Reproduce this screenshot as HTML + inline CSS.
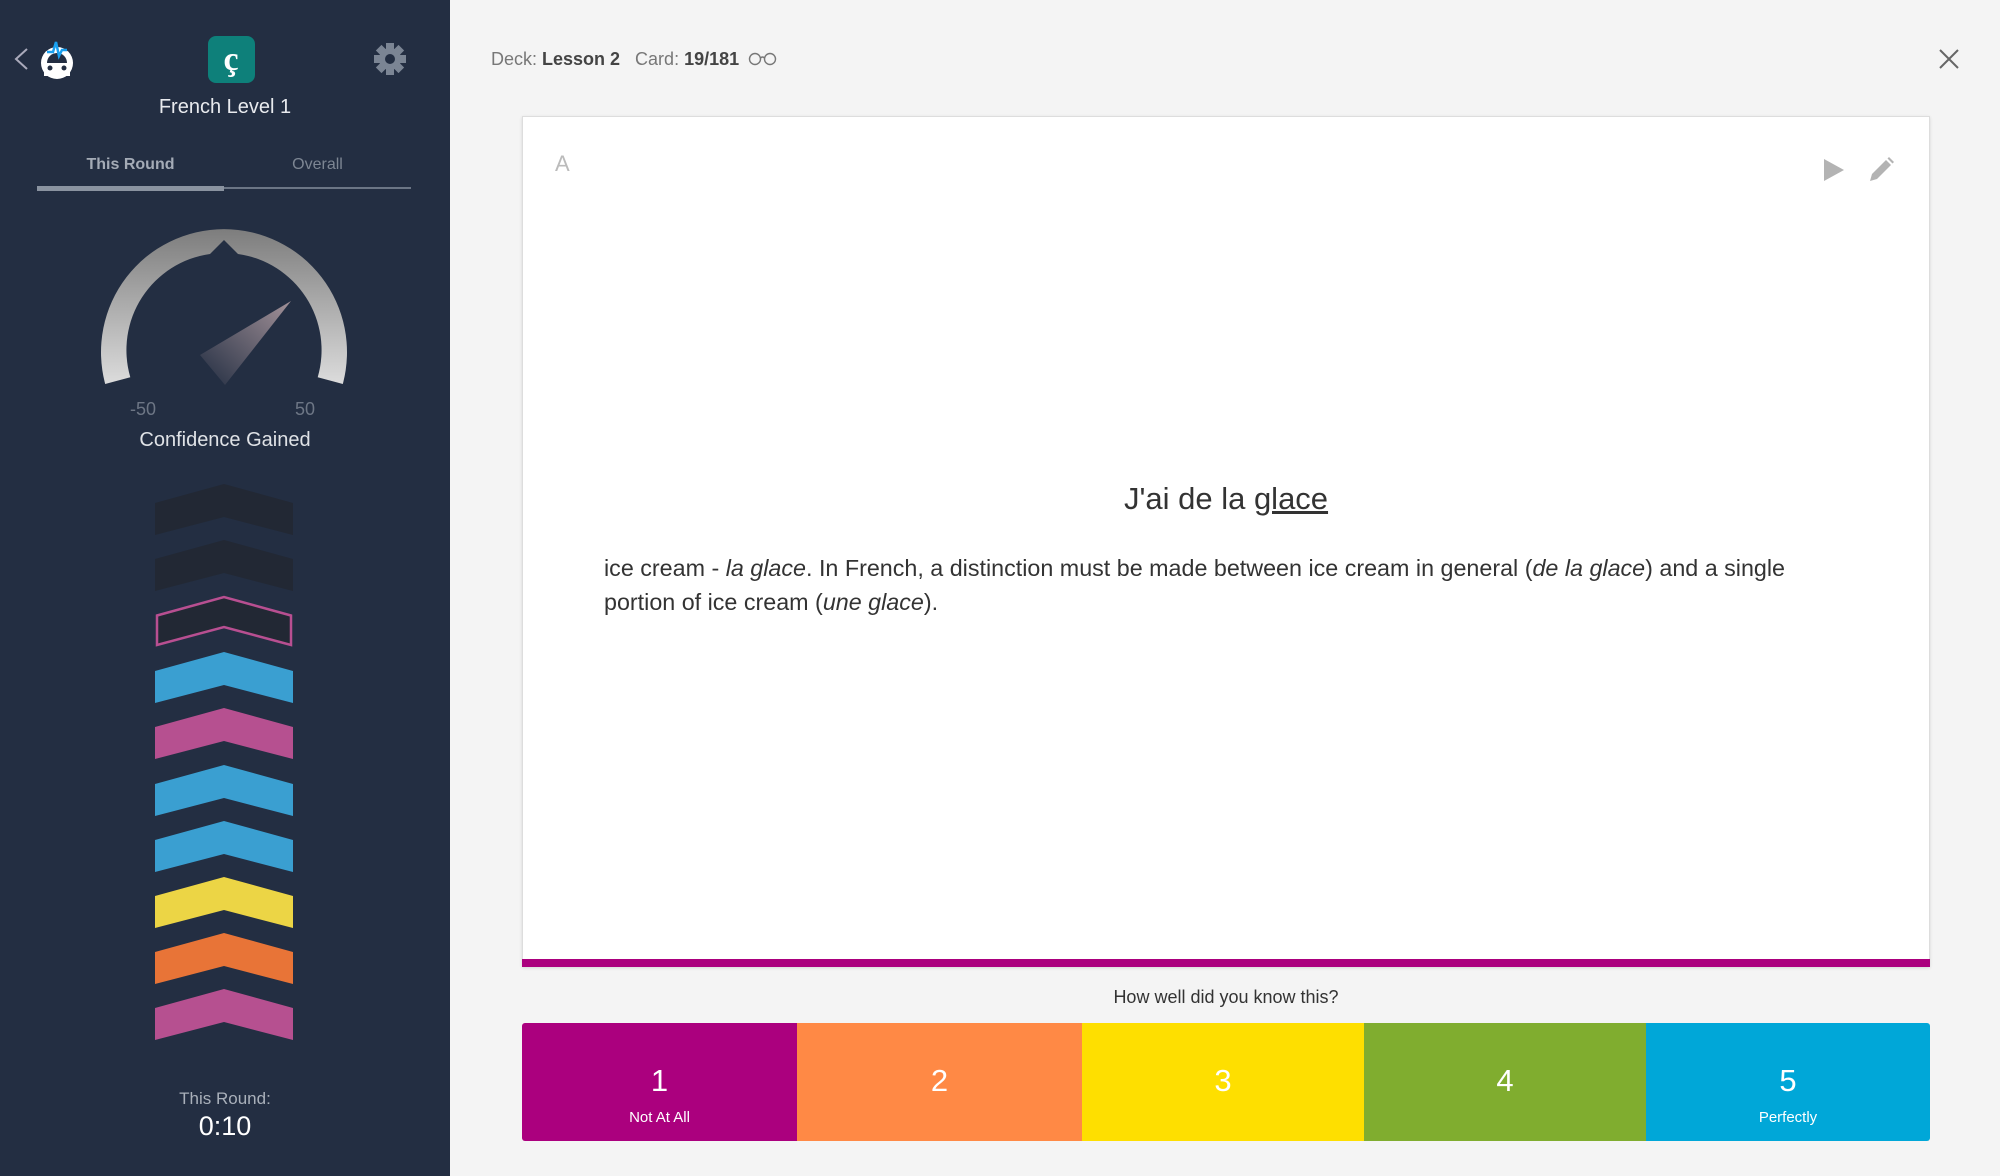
<!DOCTYPE html>
<html><head><meta charset="utf-8"><style>
*{margin:0;padding:0;box-sizing:border-box}
body{width:2000px;height:1176px;background:#f4f4f4;font-family:"Liberation Sans",sans-serif;position:relative;overflow:hidden}
.side{position:absolute;left:0;top:0;width:450px;height:1176px;background:#232e42}
.abs{position:absolute}
.t{position:absolute;white-space:nowrap}
.btn{position:absolute;top:1023px;height:118px;color:#fff;text-align:center}
.btn .n{position:absolute;left:0;right:0;top:40px;font-size:31px;line-height:36px}
.btn .l{position:absolute;left:0;right:0;top:86px;font-size:15px}
</style></head><body>
<div class="side">
  <svg class="abs" style="left:0;top:0" width="450" height="1176">
    <path d="M27 49 L16 59 L27 69" fill="none" stroke="#aab" stroke-width="2"/>
    <circle cx="57" cy="63" r="16" fill="#fff"/>
    <circle cx="57" cy="63" r="10" fill="#232e42"/>
    <rect x="44" y="63" width="26" height="13" fill="#fff"/>
    <circle cx="50" cy="68" r="2.5" fill="#232e42"/><circle cx="64" cy="68" r="2.5" fill="#232e42"/>
    <path d="M47 52 L53 52 L56 42 L59 56 L62 50 L67 50" fill="none" stroke="#19a0f0" stroke-width="2.5"/>
    <rect x="208" y="36" width="47" height="47" rx="8" fill="#0e807a"/>
    <text x="231" y="70" font-family="Liberation Serif" font-weight="bold" font-size="34" fill="#fff" text-anchor="middle">ç</text>
    <g transform="translate(390,59)" fill="#7b8594">
      <circle r="11"/>
      <g><rect x="-4" y="-16" width="8" height="32"/><rect x="-4" y="-16" width="8" height="32" transform="rotate(45)"/><rect x="-4" y="-16" width="8" height="32" transform="rotate(90)"/><rect x="-4" y="-16" width="8" height="32" transform="rotate(135)"/></g>
      <circle r="5" fill="#232e42"/>
    </g>
    <rect x="37" y="187" width="374" height="2" fill="#6b7585"/>
    <rect x="37" y="186" width="187" height="5" fill="#8a93a0"/>
    <defs>
      <linearGradient id="g" x1="0" y1="0" x2="0" y2="1"><stop offset="0" stop-color="#7d7d7d"/><stop offset="1" stop-color="#dcdcdc"/></linearGradient>
      <linearGradient id="n" x1="0" y1="1" x2="1" y2="0"><stop offset="0" stop-color="#232e42"/><stop offset="1" stop-color="#b9a3a8"/></linearGradient>
    </defs>
    <path d="M105.2 384 A123 123 0 1 1 342.8 384 L317.7 377.2 A97 97 0 0 0 238 254 L224 240 L210 254 A97 97 0 0 0 130.3 377.2 Z" fill="url(#g)"/>
    <path d="M200 355 L291 301 L225 385 Z" fill="url(#n)" opacity="0.85"/>
    <g>
      <path d="M155 503 L224 484 L293 503 L293 535 L224 517 L155 535 Z" fill="#222834"/>
      <path d="M155 559 L224 540 L293 559 L293 591 L224 573 L155 591 Z" fill="#222834"/>
      <path d="M157 615.5 L224 597 L291 615.5 L291 645 L224 627 L157 645 Z" fill="#222834" stroke="#b84f91" stroke-width="2.5"/>
      <path d="M155 671 L224 652 L293 671 L293 703 L224 685 L155 703 Z" fill="#3a9fd1"/>
      <path d="M155 727 L224 708 L293 727 L293 759 L224 741 L155 759 Z" fill="#b65090"/>
      <path d="M155 784 L224 765 L293 784 L293 816 L224 798 L155 816 Z" fill="#3a9fd1"/>
      <path d="M155 840 L224 821 L293 840 L293 872 L224 854 L155 872 Z" fill="#3a9fd1"/>
      <path d="M155 896 L224 877 L293 896 L293 928 L224 910 L155 928 Z" fill="#ecd545"/>
      <path d="M155 952 L224 933 L293 952 L293 984 L224 966 L155 984 Z" fill="#e87437"/>
      <path d="M155 1008 L224 989 L293 1008 L293 1040 L224 1022 L155 1040 Z" fill="#b65090"/>
    </g>
  </svg>
  <div class="t" style="left:0;width:450px;text-align:center;top:96px;font-size:20px;color:#e8eaee">French Level 1</div>
  <div class="t" style="left:37px;width:187px;text-align:center;top:156px;font-size:16px;font-weight:bold;color:#a4abb6">This Round</div>
  <div class="t" style="left:224px;width:187px;text-align:center;top:156px;font-size:16px;color:#7d8693">Overall</div>
  <div class="t" style="left:130px;top:399px;font-size:18px;color:#6d7685">-50</div>
  <div class="t" style="left:295px;top:399px;font-size:18px;color:#6d7685">50</div>
  <div class="t" style="left:0;width:450px;text-align:center;top:429px;font-size:20px;color:#dfe2e6">Confidence Gained</div>
  <div class="t" style="left:0;width:450px;text-align:center;top:1089px;font-size:17px;color:#a9b0ba">This Round:</div>
  <div class="t" style="left:0;width:450px;text-align:center;top:1111px;font-size:27px;color:#fff">0:10</div>
</div>

<div class="t" style="left:491px;top:49px;font-size:18px;color:#777">Deck: <b style="color:#444">Lesson 2</b>&nbsp;&nbsp;&nbsp;Card: <b style="color:#444">19/181</b></div>
<svg class="abs" style="left:748px;top:52px" width="30" height="14"><circle cx="7" cy="7" r="5.5" fill="none" stroke="#777" stroke-width="1.4"/><circle cx="22" cy="7" r="5.5" fill="none" stroke="#777" stroke-width="1.4"/><path d="M12.5 6 Q14.5 4 16.5 6" fill="none" stroke="#777" stroke-width="1.4"/></svg>
<svg class="abs" style="left:1938px;top:48px" width="22" height="22"><path d="M2 2 L20 20 M20 2 L2 20" stroke="#666" stroke-width="2"/></svg>

<div class="abs" style="left:522px;top:116px;width:1408px;height:851px;background:#fff;border:1px solid #ddd;box-shadow:0 1px 3px rgba(0,0,0,0.12)"></div>
<div class="abs" style="left:522px;top:959px;width:1408px;height:8px;background:#ab007e"></div>
<div class="t" style="left:555px;top:151px;font-size:22px;color:#bbb">A</div>
<svg class="abs" style="left:1822px;top:157px" width="24" height="26"><path d="M2 2 L22 13 L2 24 Z" fill="#b3b3b3"/></svg>
<svg class="abs" style="left:1867px;top:156px" width="28" height="28"><path d="M3 25 L5 18 L19 4 L24 9 L10 23 Z" fill="#b3b3b3"/><path d="M20.5 2.5 L22 1 L27 6 L25.5 7.5 Z" fill="#b3b3b3"/></svg>

<div class="t" style="left:522px;width:1408px;text-align:center;top:481px;font-size:31px;color:#333">J'ai de la <u>glace</u></div>
<div class="t" style="left:604px;top:551px;font-size:23.3px;line-height:34px;color:#333">ice cream - <i>la glace</i>. In French, a distinction must be made between ice cream in general (<i>de la glace</i>) and a single<br>portion of ice cream (<i>une glace</i>).</div>

<div class="t" style="left:522px;width:1408px;text-align:center;top:987px;font-size:18px;color:#333">How well did you know this?</div>
<div class="btn" style="left:522px;width:275px;background:#ab007e;border-radius:3px 0 0 3px"><div class="n">1</div><div class="l">Not At All</div></div>
<div class="btn" style="left:797px;width:285px;background:#ff8945"><div class="n">2</div></div>
<div class="btn" style="left:1082px;width:282px;background:#fedf00"><div class="n">3</div></div>
<div class="btn" style="left:1364px;width:282px;background:#80ad2f"><div class="n">4</div></div>
<div class="btn" style="left:1646px;width:284px;background:#00a7d8;border-radius:0 3px 3px 0"><div class="n">5</div><div class="l">Perfectly</div></div>
</body></html>
